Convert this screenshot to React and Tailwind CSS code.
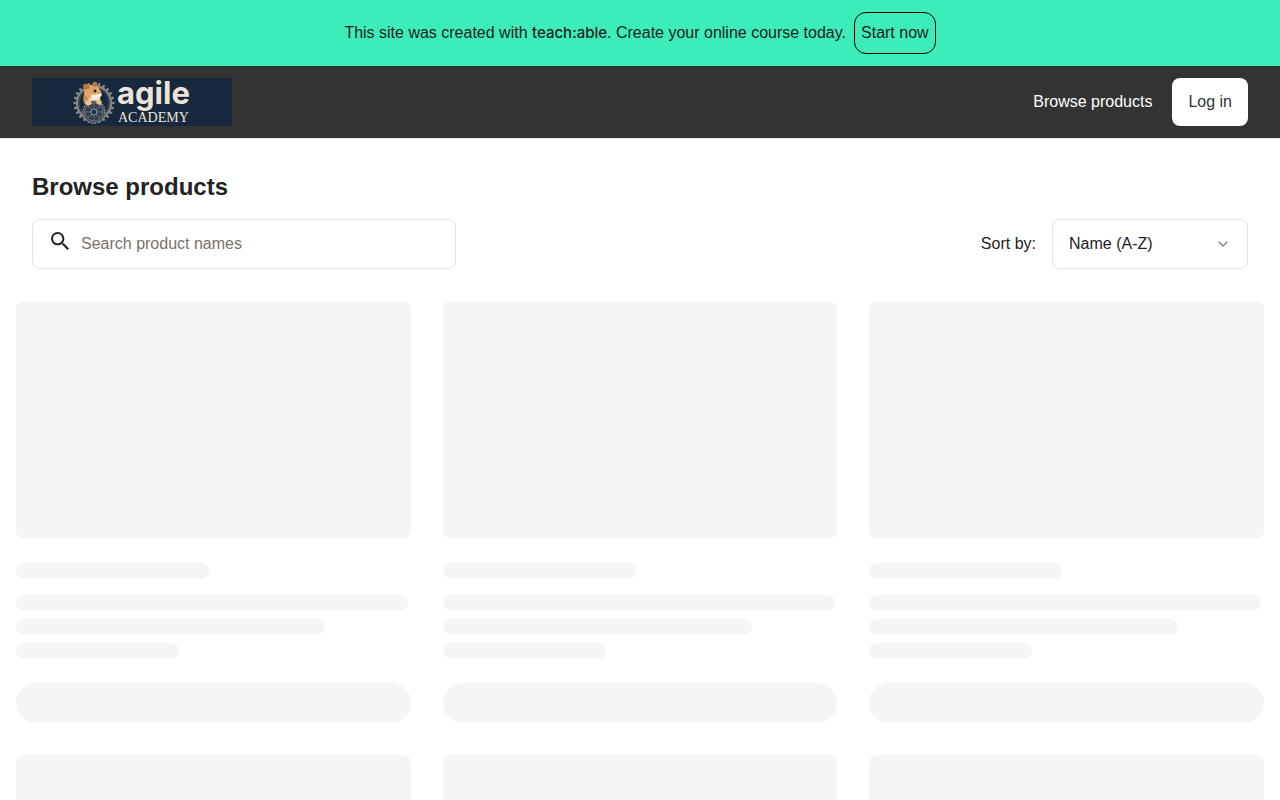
import React from 'react'
import { useState } from 'react'

const GEAR_TEETH = Array.from({ length: 24 }, (_, i) => i * 15)
const WHEEL_SPOKES = [0, 45, 90, 135]

const AcademyLogo = () => (
  <svg viewBox="0 0 200 48" className="h-12 w-[200px] overflow-visible" role="img" aria-label="Agile Academy">
    <rect width="200" height="48" fill="#17283f" />

    {/* Outer gear */}
    <g transform="translate(62 25)">
      {GEAR_TEETH.map((deg) => (
        <rect key={deg} x="-1.2" y="-20.5" width="2.4" height="3.5" fill="#8f8c88" transform={`rotate(${deg})`} />
      ))}
      <circle r="17" fill="#17283f" stroke="#85837f" strokeWidth="2.4" />
      <circle r="15" fill="none" stroke="#4a5666" strokeWidth="0.8" />
    </g>

    {/* Squirrel */}
    <path d="M53 14c-2 3-2 8-1 11 1 2 3 3 5 3l10-3c1-3 0-7-2-9z" fill="#cd8b50" />
    <path d="M57 19c3 2 8 2 11 0 1 3 0 6-2 8h-7c-2-2-3-5-2-8z" fill="#f3e2cc" />
    <path d="M52 14c0-4 4-7 8-7 4 0 7 2 8 5l2 3c0 4-4 5-8 5-6 1-10-2-10-6z" fill="#e2a568" />
    <path d="M59 17c3-1 7 0 11-2 0 4-4 6-8 6-2 0-4-2-3-4z" fill="#fbeedd" />
    <path d="M53 12c-2-2-2-6 0-6 2-1 4 1 5 4zM60 8c0-3 2-5 4-4s1 4 0 5z" fill="#bd7840" />
    <circle cx="63" cy="13" r="1.4" fill="#1d1d25" />
    <circle cx="69.5" cy="14.8" r="0.9" fill="#6b3d2c" />

    {/* Wheel in front */}
    <g transform="translate(62 34)">
      <circle r="11" fill="#3a434f" stroke="#85837f" strokeWidth="1.6" strokeDasharray="2 1" />
      <circle r="9" fill="#333f4e" stroke="#6f7379" strokeWidth="1" />
      {WHEEL_SPOKES.map((deg) => (
        <path key={deg} d="M-9 0H9" stroke="#626a74" strokeWidth="1" transform={`rotate(${deg})`} />
      ))}
      <circle r="3" fill="#26374c" stroke="#8f949b" strokeWidth="1" />
    </g>
    <path d="M53 25c1-3 4-4 6-1l1 2-4 2zM64 23c2-2 5-1 6 1l-1 3-4-1z" fill="#eebd8b" />

    <text x="85" y="26" fill="#ece4d6" fontFamily="Inter, sans-serif" fontWeight="700" fontSize="31">agile</text>
    <text x="86" y="44" fill="#ece4d6" fontFamily="'Liberation Serif', serif" fontSize="14">ACADEMY</text>
  </svg>
)

const Banner = () => (
  <div className="flex flex-wrap items-center justify-center gap-2 bg-[#3cedb9] px-4 py-3">
    <p>
      This site was created with{' '}
      <a href="#teachable" className="font-['Inter',sans-serif] text-[15px] font-medium">teach:able</a>
      . Create your online course today.
    </p>
    <button type="button" className="rounded-xl border border-black px-1.5 py-2">Start now</button>
  </div>
)

const Header = () => (
  <header className="flex items-center justify-between border-b border-gray-200 bg-[#333333] px-8 py-3">
    <a href="#home">
      <AcademyLogo />
    </a>
    <nav className="flex items-center gap-5">
      <a href="#products" className="text-white">Browse products</a>
      <a href="#login" className="rounded-lg bg-white px-4 py-3 text-[#333333]">Log in</a>
    </nav>
  </header>
)

const SkeletonCard = () => (
  <div>
    <div className="h-[238px] rounded-lg bg-stone-100" />
    <div className="mt-6 h-4 w-[193px] max-w-full rounded-full bg-stone-100" />
    <div className="mt-4 flex flex-col gap-2">
      <div className="h-4 w-[392px] max-w-full rounded-full bg-stone-100" />
      <div className="h-4 w-[309px] max-w-full rounded-full bg-stone-100" />
      <div className="h-4 w-[163px] max-w-full rounded-full bg-stone-100" />
    </div>
    <div className="mt-6 h-10 rounded-full bg-stone-100" />
  </div>
)

const App = () => {
  const [search, setSearch] = useState('')
  const [sort, setSort] = useState('name-asc')

  return (
    <div className="min-h-screen bg-white font-['Liberation_Sans',Arial,sans-serif] text-base text-[#222222]">
      <Banner />
      <Header />

      <main className="py-8">
        <div className="px-8">
          <h1 className="text-2xl font-bold">Browse products</h1>

          {/* Search and sort */}
          <div className="mt-4 flex flex-wrap items-center justify-between gap-4">
            <label className="flex w-full max-w-[424px] items-start gap-3 rounded-lg border border-[#e2e2e2] px-[18px] py-3">
              <svg viewBox="3 3 17.5 17.5" className="size-[18px] shrink-0" fill="currentColor" aria-hidden="true">
                <path d="M15.5 14h-.79l-.28-.27A6.471 6.471 0 0 0 16 9.5 6.5 6.5 0 1 0 9.5 16c1.61 0 3.09-.59 4.23-1.57l.27.28v.79l5 4.99L20.49 19l-4.99-5zm-6 0C7.01 14 5 11.99 5 9.5S7.01 5 9.5 5 14 7.01 14 9.5 11.99 14 9.5 14z" />
              </svg>
              <input
                type="text"
                value={search}
                onChange={(e) => setSearch(e.target.value)}
                placeholder="Search product names"
                aria-label="Search product names"
                className="h-6 min-w-0 flex-1 bg-transparent outline-none placeholder:text-stone-500"
              />
            </label>

            <div className="flex items-center gap-4">
              <label htmlFor="sort">Sort by:</label>
              <div className="relative">
                <select
                  id="sort"
                  value={sort}
                  onChange={(e) => setSort(e.target.value)}
                  className="h-[50px] w-[196px] appearance-none rounded-lg border border-[#e2e2e2] bg-white px-4 outline-none"
                >
                  <option value="name-asc">Name (A-Z)</option>
                  <option value="name-desc">Name (Z-A)</option>
                </select>
                <svg
                  viewBox="0 0 16 16"
                  className="pointer-events-none absolute right-4 top-1/2 size-4 -translate-y-1/2"
                  fill="none"
                  stroke="#8a8a8a"
                  strokeWidth="1.5"
                  strokeLinecap="round"
                  strokeLinejoin="round"
                  aria-hidden="true"
                >
                  <path d="M3 6l4 4 4-4" />
                </svg>
              </div>
            </div>
          </div>
        </div>

        {/* Loading placeholders */}
        <div className="mt-8 grid grid-cols-3 gap-8 px-4">
          {Array.from({ length: 6 }, (_, i) => (
            <SkeletonCard key={i} />
          ))}
        </div>
      </main>
    </div>
  )
}

export default App
